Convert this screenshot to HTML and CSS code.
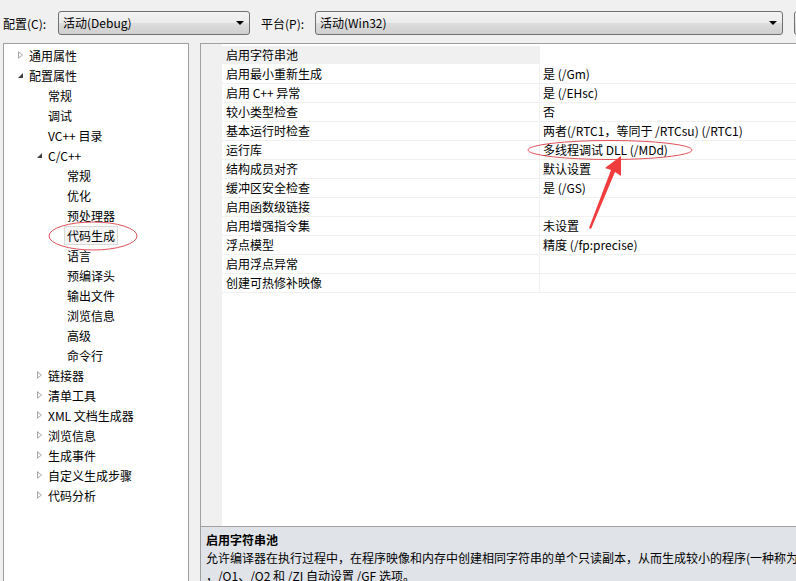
FILE: index.html
```html
<!DOCTYPE html>
<html lang="zh-CN">
<head>
    <meta charset="UTF-8">
    <title>属性页</title>
    <link rel="stylesheet" href="styles.css">
</head>
<body>
    <div class="toolbar">
        <span class="label">配置(C):</span>
        <div class="combo combo-config">活动(Debug)<span class="drop"></span></div>
        <span class="label label-platform">平台(P):</span>
        <div class="combo combo-platform">活动(Win32)<span class="drop"></span></div>
        <div class="combo combo-cut"></div>
    </div>

    <div class="main">
        <div class="tree">
            <div class="node lv0"><span class="tw closed"></span>通用属性</div>
            <div class="node lv0"><span class="tw open"></span>配置属性</div>
            <div class="node lv1"><span class="tw"></span>常规</div>
            <div class="node lv1"><span class="tw"></span>调试</div>
            <div class="node lv1"><span class="tw"></span>VC++ 目录</div>
            <div class="node lv1"><span class="tw open"></span>C/C++</div>
            <div class="node lv2"><span class="tw"></span>常规</div>
            <div class="node lv2"><span class="tw"></span>优化</div>
            <div class="node lv2"><span class="tw"></span>预处理器</div>
            <div class="node lv2"><span class="tw"></span><span class="selected">代码生成</span></div>
            <div class="node lv2"><span class="tw"></span>语言</div>
            <div class="node lv2"><span class="tw"></span>预编译头</div>
            <div class="node lv2"><span class="tw"></span>输出文件</div>
            <div class="node lv2"><span class="tw"></span>浏览信息</div>
            <div class="node lv2"><span class="tw"></span>高级</div>
            <div class="node lv2"><span class="tw"></span>命令行</div>
            <div class="node lv1"><span class="tw closed"></span>链接器</div>
            <div class="node lv1"><span class="tw closed"></span>清单工具</div>
            <div class="node lv1"><span class="tw closed"></span>XML 文档生成器</div>
            <div class="node lv1"><span class="tw closed"></span>浏览信息</div>
            <div class="node lv1"><span class="tw closed"></span>生成事件</div>
            <div class="node lv1"><span class="tw closed"></span>自定义生成步骤</div>
            <div class="node lv1"><span class="tw closed"></span>代码分析</div>
        </div>

        <div class="right">
            <div class="grid">
                <div class="row current"><div class="name">启用字符串池</div><div class="value"></div></div>
                <div class="row"><div class="name">启用最小重新生成</div><div class="value">是 (/Gm)</div></div>
                <div class="row"><div class="name">启用 C++ 异常</div><div class="value">是 (/EHsc)</div></div>
                <div class="row"><div class="name">较小类型检查</div><div class="value">否</div></div>
                <div class="row"><div class="name">基本运行时检查</div><div class="value">两者(/RTC1，等同于 /RTCsu) (/RTC1)</div></div>
                <div class="row"><div class="name">运行库</div><div class="value">多线程调试 DLL (/MDd)</div></div>
                <div class="row"><div class="name">结构成员对齐</div><div class="value">默认设置</div></div>
                <div class="row"><div class="name">缓冲区安全检查</div><div class="value">是 (/GS)</div></div>
                <div class="row"><div class="name">启用函数级链接</div><div class="value"></div></div>
                <div class="row"><div class="name">启用增强指令集</div><div class="value">未设置</div></div>
                <div class="row"><div class="name">浮点模型</div><div class="value">精度 (/fp:precise)</div></div>
                <div class="row"><div class="name">启用浮点异常</div><div class="value"></div></div>
                <div class="row"><div class="name">创建可热修补映像</div><div class="value"></div></div>
            </div>
            <div class="desc">
                <div class="desc-title">启用字符串池</div>
                <div class="desc-line">允许编译器在执行过程中，在程序映像和内存中创建相同字符串的单个只读副本，从而生成较小的程序(一种称为</div>
                <div class="desc-line">，/O1、/O2 和 /ZI 自动设置 /GF 选项。</div>
            </div>
        </div>
    </div>

    <svg class="marks" width="796" height="581" viewBox="0 0 796 581">
        <ellipse cx="93" cy="236" rx="44" ry="14" fill="none" stroke="#e0505a" stroke-width="1"/>
        <ellipse cx="610" cy="150" rx="82" ry="9.5" fill="none" stroke="#e0505a" stroke-width="1"/>
        <polygon points="589,228 611,170 605,168 621,156 621,176 615,172 591,229" fill="#f03c3c"/>
    </svg>
</body>
</html>
```

FILE: styles.css
```css
html, body {
    margin: 0;
    height: 100%;
    overflow: hidden;
}

body {
    position: relative;
    background-color: #f0f0f0;
    font-family: "Noto Sans CJK SC", "Microsoft YaHei", sans-serif;
    font-size: 12px;
    color: #000;
}

.toolbar {
    display: flex;
    align-items: center;
    height: 24px;
    padding: 11px 0 8px 3px;
    white-space: nowrap;
}

.toolbar > * {
    flex-shrink: 0;
}

.label {
    width: 55px;
}

.label-platform {
    margin-left: 11px;
    width: 54px;
}

.combo {
    position: relative;
    box-sizing: border-box;
    height: 24px;
    line-height: 22px;
    padding-left: 4px;
    border: 1px solid #707070;
    border-radius: 3px;
    background: linear-gradient(#f3f3f3, #ebebeb 50%, #dddddd 51%, #cfcfcf);
}

.combo-config {
    width: 192px;
}

.combo-platform {
    width: 468px;
}

.combo-cut {
    margin-left: 11px;
    width: 40px;
}

.drop {
    position: absolute;
    right: 5px;
    top: 9px;
    border-left: 4px solid transparent;
    border-right: 4px solid transparent;
    border-top: 4px solid #000;
}

.main {
    display: flex;
    height: 538px;
}

.tree {
    box-sizing: border-box;
    flex-shrink: 0;
    margin-left: 3px;
    width: 186px;
    height: 560px;
    padding-top: 1px;
    border: 1px solid #a0a0a0;
    background-color: #fff;
}

.node {
    display: flex;
    align-items: center;
    height: 20px;
    white-space: nowrap;
}

.lv0 { padding-left: 12px; }
.lv1 { padding-left: 31px; }
.lv2 { padding-left: 50px; }

.tw {
    position: relative;
    width: 13px;
    height: 20px;
    flex-shrink: 0;
}

.tw.closed::before {
    content: "";
    position: absolute;
    left: 2px;
    top: 6px;
    width: 0;
    height: 0;
    border-top: 4px solid transparent;
    border-bottom: 4px solid transparent;
    border-left: 5px solid #a6a6a6;
}

.tw.closed::after {
    content: "";
    position: absolute;
    left: 3px;
    top: 8px;
    border-top: 2px solid transparent;
    border-bottom: 2px solid transparent;
    border-left: 3px solid #fff;
}

.tw.open::before {
    content: "";
    position: absolute;
    left: 2px;
    top: 8px;
    border-left: 5px solid transparent;
    border-bottom: 5px solid #404040;
}

.selected {
    margin-left: -3px;
    padding: 0 2px;
    line-height: 17px;
    border: 1px solid #d9d9d9;
    background-color: #f6f6f6;
}

.right {
    display: flex;
    flex-direction: column;
    min-width: 0;
    margin-left: 11px;
    flex: 1;
}

.grid {
    flex: 1;
    padding: 2px 0 0 21px;
    border-top: 1px solid #a0a0a0;
    border-left: 1px solid #a0a0a0;
    background-color: #fff;
    box-shadow: inset 21px 0 0 #f0f0f0;
}

.row {
    box-sizing: border-box;
    display: flex;
    height: 19px;
    line-height: 18px;
    border-bottom: 1px solid #f0f0f0;
    white-space: nowrap;
}

.name {
    box-sizing: border-box;
    width: 318px;
    padding-left: 4px;
    border-right: 1px solid #f0f0f0;
}

.value {
    padding-left: 3px;
}

.row.current .name {
    background-color: #f0f0f0;
}

.row.current {
    border-bottom-color: #fff;
}

.desc {
    height: 50px;
    padding: 4px 0 0 5px;
    border-top: 1px solid #a0a0a0;
    border-left: 1px solid #a0a0a0;
    background-color: #e0e4e9;
    white-space: nowrap;
    overflow: hidden;
}

.desc-title {
    font-weight: bold;
    line-height: 18px;
}

.desc-line {
    line-height: 18px;
}

.marks {
    position: absolute;
    left: 0;
    top: 0;
    pointer-events: none;
}
```
